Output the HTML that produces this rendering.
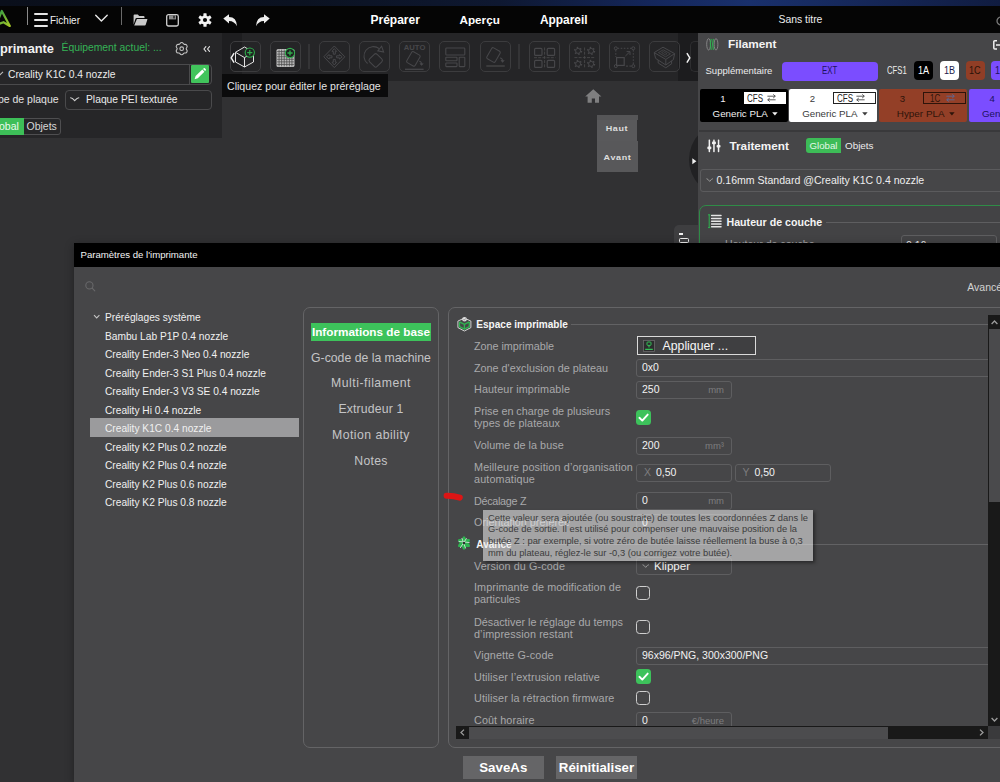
<!DOCTYPE html>
<html lang="fr">
<head>
<meta charset="utf-8">
<title>Creality Print</title>
<style>
*{box-sizing:border-box;margin:0;padding:0}
html,body{width:1000px;height:782px;overflow:hidden;background:#313133}
body{font-family:"Liberation Sans",sans-serif;color:#e6e6e6;-webkit-font-smoothing:antialiased}
#root{position:relative;width:1000px;height:782px;overflow:hidden;background:#313133}
.a{position:absolute}
.t{position:absolute;white-space:nowrap;line-height:16px;height:16px}
.b{font-weight:700}
svg{position:absolute;overflow:visible}
/* top */
#strip{left:0;top:0;width:1000px;height:6px;background:linear-gradient(90deg,#0a0f1b 0%,#0b1221 30%,#0e1831 50%,#14265a 65%,#19306c 75%,#142452 90%,#101c40 100%)}
#bar{left:0;top:5.7px;width:1000px;height:27.1px;background:#050505}
/* left panel */
#lp{left:0;top:33px;width:221.6px;height:105px;background:#262628}
.box{position:absolute;border:1px solid #515153;border-radius:4px}
/* toolbar */
#tb{left:222px;top:33px;width:477px;height:48px;background:#252527}
.tbtn{position:absolute;top:41px;width:31px;height:31px;border:1px solid #3c3c3e;border-radius:5px}
.tsep{position:absolute;top:44px;width:2px;height:25px;background:#343436}
/* right panel */
#rp{left:698.4px;top:33px;width:302px;height:210px;background:#464648}
.card{position:absolute;top:89px;height:33.2px;border-radius:2px}
.chip{position:absolute;top:61.3px;width:19.4px;height:19.2px;border-radius:4px;font-size:10.6px;line-height:19.4px;text-align:center}
/* dialog */
#dlg{left:74px;top:243px;width:926px;height:539px;background:#464648;box-shadow:0 2px 9px rgba(0,0,0,0.32)}
#dtitle{left:74px;top:243px;width:926px;height:24px;background:#000}
.tree{position:absolute;left:105px;font-size:10.2px;color:#f0f0f0;white-space:nowrap;line-height:16px;height:16px}
.tab{position:absolute;left:304px;width:134px;text-align:center;font-size:12.25px;color:#c4c4c6;white-space:nowrap;line-height:18px;height:18px}
.lbl{position:absolute;left:474px;margin-top:-0.6px;font-size:10.8px;color:#a9a9ab;white-space:nowrap;line-height:12px}
.inp{position:absolute;left:636px;height:18px;border:1px solid #5e5e60;border-radius:3px;font-size:10.5px;line-height:15.8px;color:#f2f2f2;padding-left:5px;white-space:nowrap}
.unit{position:absolute;right:7px;top:0;color:#7d7d7f;font-size:9.5px}
.cb{position:absolute;left:636px;width:15px;height:15px;border-radius:3.5px}
.cb.on{background:#3dc25b}
.cb.off{border:1.5px solid #cfcfcf;background:transparent;width:14px;height:14px}
.btn{position:absolute;top:756px;height:23.4px;background:#656567;color:#fff;font-weight:700;text-align:center;line-height:23px;white-space:nowrap}
</style>
</head>
<body>
<div id="root">

<!-- ===== desktop strip + title bar ===== -->
<div class="a" id="strip"></div>
<div class="a" id="bar"></div>
<!-- logo -->
<svg style="left:0;top:9px" width="12" height="20" viewBox="0 9 12 20">
  <defs><linearGradient id="lg" x1="0" y1="0" x2="1" y2="1"><stop offset="0" stop-color="#2f9a45"/><stop offset="1" stop-color="#a6c826"/></linearGradient></defs>
  <path d="M-3 22.5 L1.8 11 L9.8 26 L3.5 22.2 L-2 24.2" fill="none" stroke="url(#lg)" stroke-width="2.2" stroke-linejoin="round" stroke-linecap="round"/>
</svg>
<div class="a" style="left:27px;top:7px;width:1px;height:18px;background:#8a8a8a"></div>
<div class="a" style="left:34px;top:13px;width:13.5px;height:1.5px;background:#e6e6e6;border-radius:1px"></div>
<div class="a" style="left:34px;top:19px;width:13.5px;height:1.5px;background:#e6e6e6;border-radius:1px"></div>
<div class="a" style="left:34px;top:25px;width:13.5px;height:1.5px;background:#e6e6e6;border-radius:1px"></div>
<div class="t" style="left:50px;top:12.5px;font-size:10px;color:#f0f0f0">Fichier</div>
<svg style="left:95px;top:14px" width="13" height="9" viewBox="0 0 13 9"><path d="M0.7 1.2 L6.4 7 L12.2 1.2" fill="none" stroke="#e8e8e8" stroke-width="1.4" stroke-linecap="round" stroke-linejoin="round"/></svg>
<div class="a" style="left:120.5px;top:7px;width:1px;height:18px;background:#6a6a6a"></div>
<!-- folder -->
<svg style="left:133px;top:14px" width="15" height="12" viewBox="0 0 15 12"><path d="M0.6 1.4 Q0.6 0.5 1.5 0.5 L4.8 0.5 L6.2 2 L10.6 2 Q11.5 2 11.5 2.9 L11.5 4 L3.6 4 Q2.7 4 2.4 4.9 L0.6 10.4 Z" fill="#c9c9c9"/><path d="M3.9 4.9 L14 4.9 Q14.6 4.9 14.4 5.6 L12.7 10.8 Q12.5 11.5 11.8 11.5 L1.2 11.5 Z" fill="#c9c9c9"/></svg>
<!-- save -->
<svg style="left:166px;top:13.5px" width="13" height="13" viewBox="0 0 13 13"><rect x="0.7" y="0.7" width="11.6" height="11.3" rx="1.8" fill="none" stroke="#d0d0d0" stroke-width="1.3"/><rect x="3" y="1.2" width="7" height="4.2" fill="#8d8d8d"/><rect x="7.2" y="1.8" width="1.6" height="2.6" fill="#2a2a2a"/></svg>
<!-- gear -->
<svg style="left:198px;top:13px" width="14" height="14" viewBox="-7 -7 14 14"><g fill="#f4f4f4"><circle r="4.6"/><g id="gt"><rect x="-1.6" y="-6.8" width="3.2" height="3" rx="0.6"/></g><use href="#gt" transform="rotate(60)"/><use href="#gt" transform="rotate(120)"/><use href="#gt" transform="rotate(180)"/><use href="#gt" transform="rotate(240)"/><use href="#gt" transform="rotate(300)"/></g><circle r="2.1" fill="#050505"/></svg>
<!-- undo / redo -->
<svg style="left:223px;top:13.5px" width="15" height="13" viewBox="0 0 15 13"><path d="M0.3 4.6 L6 0.2 L6 2.9 Q13.6 2.9 14 12.2 Q11.6 7 6 6.9 L6 9.4 Z" fill="#eeeeee"/></svg>
<svg style="left:255px;top:13.5px" width="15" height="13" viewBox="0 0 15 13"><path d="M14.7 4.6 L9 0.2 L9 2.9 Q1.4 2.9 1 12.2 Q3.4 7 9 6.9 L9 9.4 Z" fill="#eeeeee"/></svg>
<div class="t b" style="left:370.5px;top:11.5px;font-size:12px;color:#fff">Préparer</div>
<div class="t b" style="left:459.5px;top:11.5px;font-size:11.7px;color:#fff">Aperçu</div>
<div class="t b" style="left:540px;top:11.5px;font-size:11.9px;color:#fff">Appareil</div>
<div class="t" style="left:778.5px;top:12px;font-size:10.4px;color:#ededed">Sans titre</div>
<svg style="left:996.3px;top:15.7px" width="8" height="10" viewBox="0 0 8 10"><circle cx="5" cy="5" r="4" fill="none" stroke="#7a7a7a" stroke-width="1.3"/></svg>

<!-- ===== viewport items ===== -->
<div class="a" id="tb"></div>
<div class="a" style="left:222px;top:33px;width:19.5px;height:48px;background:#1e1e20"></div>
<div class="a" style="left:678px;top:33px;width:21px;height:48px;background:#1c1c1e"></div>
<div class="tbtn" style="left:229.5px"></div>
<div class="tbtn" style="left:269.5px"></div>
<div class="tbtn" style="left:318.5px"></div>
<div class="tbtn" style="left:358.5px"></div>
<div class="tbtn" style="left:399px"></div>
<div class="tbtn" style="left:439px"></div>
<div class="tbtn" style="left:479.5px"></div>
<div class="tbtn" style="left:528.5px"></div>
<div class="tbtn" style="left:568.5px"></div>
<div class="tbtn" style="left:608.5px"></div>
<div class="tbtn" style="left:648.5px"></div>
<div class="tbtn" style="left:689.5px;width:12px;border-right:none;border-radius:5px 0 0 5px;border-color:#2e2e30"></div>
<div class="tsep" style="left:308px"></div><div class="tsep" style="left:518px"></div>
<svg style="left:229.5px;top:53px" width="5" height="10" viewBox="0 0 5 10"><path d="M3.8 0.6 L1.2 4.9 L3.8 9.2" fill="none" stroke="#f2f2f2" stroke-width="1.5" stroke-linejoin="round" stroke-linecap="round"/></svg>
<svg style="left:685.5px;top:53px" width="5" height="10" viewBox="0 0 5 10"><path d="M1.2 0.6 L3.8 4.9 L1.2 9.2" fill="none" stroke="#f2f2f2" stroke-width="1.5" stroke-linejoin="round" stroke-linecap="round"/></svg>
<svg style="left:229px;top:41px" width="32" height="31" viewBox="229 41 32 31">
<path d="M244.5 47 L253.5 52.3 L253.5 62 L244.5 67 L235.5 62 L235.5 52.3 Z M235.5 52.3 L244.5 57.6 L253.5 52.3 M244.5 57.6 L244.5 67" fill="none" stroke="#e4e4e4" stroke-width="1" stroke-linejoin="round"/>
<circle cx="249.8" cy="52.6" r="4.6" fill="#202022" stroke="#2fae4c" stroke-width="1.1"/><path d="M247.2 52.6 H252.4 M249.8 50 V55.2" stroke="#2fae4c" stroke-width="1.2"/></svg>
<svg style="left:269px;top:41px" width="32" height="31" viewBox="269 41 32 31"><rect x="276.5" y="49" width="18" height="18" rx="1.6" fill="#bdbdbd"/><path d="M279.07 49.6 V66.4" stroke="#4a4a4a" stroke-width="0.75"/><path d="M277.1 51.57 H293.9" stroke="#4a4a4a" stroke-width="0.75"/><path d="M281.64 49.6 V66.4" stroke="#4a4a4a" stroke-width="0.75"/><path d="M277.1 54.14 H293.9" stroke="#4a4a4a" stroke-width="0.75"/><path d="M284.21 49.6 V66.4" stroke="#4a4a4a" stroke-width="0.75"/><path d="M277.1 56.71 H293.9" stroke="#4a4a4a" stroke-width="0.75"/><path d="M286.79 49.6 V66.4" stroke="#4a4a4a" stroke-width="0.75"/><path d="M277.1 59.29 H293.9" stroke="#4a4a4a" stroke-width="0.75"/><path d="M289.36 49.6 V66.4" stroke="#4a4a4a" stroke-width="0.75"/><path d="M277.1 61.86 H293.9" stroke="#4a4a4a" stroke-width="0.75"/><path d="M291.93 49.6 V66.4" stroke="#4a4a4a" stroke-width="0.75"/><path d="M277.1 64.43 H293.9" stroke="#4a4a4a" stroke-width="0.75"/><circle cx="290" cy="53" r="4.6" fill="#202022" stroke="#2fae4c" stroke-width="1.1"/><path d="M287.4 53 H292.6 M290 50.4 V55.6" stroke="#2fae4c" stroke-width="1.4"/></svg>
<svg style="left:318px;top:41px" width="32" height="31" viewBox="318 41 32 31" fill="none" stroke="#47474a" stroke-width="1">
<path d="M334.3 46 L344.8 56.8 L334.3 67.6 L323.8 56.8 Z"/>
<path d="M334.3 48.6 L336.6 51.4 H335.3 V54.2 H333.3 V51.4 H332 Z M334.3 65 L336.6 62.2 H335.3 V59.4 H333.3 V62.2 H332 Z M326.4 56.8 L329.2 54.5 V55.8 H332 V57.8 H329.2 V59.1 Z M342.2 56.8 L339.4 54.5 V55.8 H336.6 V57.8 H339.4 V59.1 Z"/></svg>
<svg style="left:358px;top:41px" width="32" height="31" viewBox="358 41 32 31" fill="none" stroke="#47474a" stroke-width="1.05">
<path d="M367.6 63.5 A9.3 9.3 0 0 1 379.2 48.6"/><path d="M381.6 46.2 L383.6 52 L377.8 50.8 Z"/>
<rect x="370.4" y="55.1" width="10.6" height="10.6" rx="2" transform="rotate(45 375.7 60.4)"/></svg>
<svg style="left:399px;top:41px" width="32" height="31" viewBox="399 41 32 31" fill="none" stroke="#47474a" stroke-width="1.05">
<text x="414.6" y="50.2" font-family="Liberation Sans" font-weight="700" font-size="7.4" text-anchor="middle" fill="#47474a" stroke="none" textLength="21.5" lengthAdjust="spacingAndGlyphs">AUTO</text>
<rect x="408.6" y="52.6" width="9.6" height="12.6" rx="1.4" transform="rotate(30 413.4 58.9)"/>
<path d="M419.2 61.2 Q421.6 61.2 421.6 64.6 M420 63.3 L421.6 65 L423.2 63.3"/><path d="M405 69.3 H423.6" stroke-width="1.3"/></svg>
<svg style="left:439px;top:41px" width="32" height="31" viewBox="439 41 32 31" fill="none" stroke="#47474a" stroke-width="1.1">
<rect x="445.8" y="48" width="19" height="7" rx="0.8"/><rect x="445.8" y="57.2" width="11.2" height="3.6" rx="0.6"/><rect x="445.8" y="63" width="11.2" height="3.6" rx="0.6"/><rect x="459.2" y="57.2" width="5.6" height="9.4" rx="0.6"/></svg>
<svg style="left:479px;top:41px" width="32" height="31" viewBox="479 41 32 31" fill="none" stroke="#47474a" stroke-width="1.05">
<rect x="488.7" y="48.7" width="9.6" height="12.6" rx="1.4" transform="rotate(30 493.5 55)"/>
<path d="M500 58 Q502.6 58 502.6 61.4 M501 60.2 L502.6 61.9 L504.2 60.2"/><path d="M486.3 66 H504.8" stroke-width="1.3"/></svg>
<svg style="left:528px;top:41px" width="32" height="31" viewBox="528 41 32 31" fill="none" stroke="#47474a" stroke-width="1.15">
<rect x="534.6" y="48.4" width="7.4" height="7" rx="1"/><rect x="547.2" y="48.4" width="7.4" height="7" rx="1"/><rect x="534.6" y="60.4" width="7.4" height="7" rx="1"/><rect x="547.2" y="60.4" width="7.4" height="7" rx="1"/>
<path d="M544.6 47.5 V68 M534 57.7 H555.4" stroke-dasharray="3 1.2" stroke-width="0.9"/></svg>
<svg style="left:568px;top:41px" width="32" height="31" viewBox="568 41 32 31" fill="none" stroke="#47474a" stroke-width="1"><circle cx="578.1" cy="50.9" r="2.5"/><circle cx="578.1" cy="50.9" r="3.4" stroke-dasharray="1.5 2.06" stroke-width="1.4"/><circle cx="591.1" cy="50.9" r="2.5"/><circle cx="591.1" cy="50.9" r="3.4" stroke-dasharray="1.5 2.06" stroke-width="1.4"/><circle cx="578.1" cy="63.9" r="2.5"/><circle cx="578.1" cy="63.9" r="3.4" stroke-dasharray="1.5 2.06" stroke-width="1.4"/><circle cx="591.1" cy="63.9" r="2.5"/><circle cx="591.1" cy="63.9" r="3.4" stroke-dasharray="1.5 2.06" stroke-width="1.4"/><path d="M584.6 47.5 V68 M574.4 57.6 H595" stroke-dasharray="3 1.2" stroke-width="0.9"/></svg>
<svg style="left:608px;top:41px" width="32" height="31" viewBox="608 41 32 31" fill="none" stroke="#47474a" stroke-width="1">
<path d="M617.6 48.3 H631.6 M633.3 50 V64.4 M615.8 50 V57" stroke-dasharray="1.6 1.5"/><path d="M626 66.1 H631.6" stroke-dasharray="2 1.4"/>
<circle cx="615.8" cy="48.3" r="1.5"/><circle cx="633.3" cy="48.3" r="1.5"/><circle cx="615.8" cy="66.1" r="1.5"/><circle cx="633.3" cy="66.1" r="1.5"/>
<rect x="616.6" y="57.6" width="7.6" height="7.8" stroke-width="1.2"/><path d="M625.4 56 L629.8 51.8 M626.6 51.6 H630 V55"/></svg>
<svg style="left:648px;top:41px" width="32" height="31" viewBox="648 41 32 31" fill="none" stroke="#47474a" stroke-width="1" stroke-linejoin="round">
<path d="M654.2 52.6 L663 47.2 L674.6 53.6 L665.8 59.4 Z M654.2 52.6 L655.6 58.4 L665.8 65 L665.8 59.4 M674.6 53.6 L673.4 59.6 L665.8 65 M658.2 60 V63 L665.8 67.8 L671.6 63.8 V61"/>
<path d="M658.4 52.6 L663.2 49.8 L670.4 53.8 L665.6 56.8 Z" stroke-width="0.8"/><path d="M661.6 52.6 L663.4 51.6 L667 53.7 L665.3 54.8 Z" stroke-width="0.7"/></svg>
<div class="a" style="left:221px;top:74px;width:166.5px;height:23px;background:#0b0b0c"></div>
<div class="t" style="left:227px;top:78px;font-size:10.6px;color:#e4e4e4">Cliquez pour éditer le préréglage</div>
<svg style="left:585px;top:89px" width="17" height="14" viewBox="0 0 17 14"><path d="M8.3 0.2 L16.4 7.6 H14 V13.8 H10 V9.6 H6.8 V13.8 H2.6 V7.6 H0.2 Z" fill="#7f7f80"/></svg>
<div class="a" style="left:597px;top:115px;width:40.5px;height:5px;background:#555557"></div>
<div class="a" style="left:597px;top:120px;width:40px;height:21px;background:#59595b"></div>
<div class="a" style="left:597px;top:141px;width:41px;height:31px;background:#58585a"></div>
<div class="t b" style="left:597px;top:121px;width:40px;text-align:center;font-size:7.4px;color:#dedede;letter-spacing:0.5px;transform:scaleX(1.22)">Haut</div>
<div class="t b" style="left:597px;top:149.5px;width:41px;text-align:center;font-size:7.4px;color:#dedede;letter-spacing:0.5px;transform:scaleX(1.22)">Avant</div>
<div class="a" style="left:689.3px;top:122px;width:75px;height:75px;border-radius:38px;background:#212123"></div>
<svg style="left:691.5px;top:157.5px" width="5" height="7" viewBox="0 0 5 7"><path d="M0.3 0.3 L4.4 3.3 L0.3 6.3 Z" fill="#f0f0f0"/></svg>
<div class="a" style="left:674px;top:224.5px;width:24.5px;height:19px;background:#3e3e40;border-radius:5px 0 0 0"></div>
<div class="a" style="left:679px;top:233px;width:4px;height:1.6px;background:#eee"></div>
<div class="a" style="left:678.5px;top:238px;width:10px;height:5px;border:1.2px solid #eee;border-radius:1.5px"></div>
<div class="a" id="lp"></div>
<div class="t b" style="left:-15px;top:41px;font-size:12.8px;color:#f2f2f2">Imprimante</div>
<div class="t" style="left:61.5px;top:40px;font-size:10.35px;color:#35b356">Équipement actuel: ...</div>
<svg style="left:175.3px;top:41.7px" width="13.4" height="13.4" viewBox="-7 -7 14 14"><path d="M0 -6.4 C1.6 -6.4 1.9 -4.6 2.6 -4.5 C3.5 -4.3 4.7 -5.4 5.55 -3.2 C6.4 -1.6 4.7 -0.9 4.7 0 C4.7 0.9 6.4 1.6 5.55 3.2 C4.7 5.4 3.5 4.3 2.6 4.5 C1.9 4.6 1.6 6.4 0 6.4 C-1.6 6.4 -1.9 4.6 -2.6 4.5 C-3.5 4.3 -4.7 5.4 -5.55 3.2 C-6.4 1.6 -4.7 0.9 -4.7 0 C-4.7 -0.9 -6.4 -1.6 -5.55 -3.2 C-4.7 -5.4 -3.5 -4.3 -2.6 -4.5 C-1.9 -4.6 -1.6 -6.4 0 -6.4 Z" fill="none" stroke="#c4c4c4" stroke-width="1.15"/><circle r="1.9" fill="none" stroke="#c4c4c4" stroke-width="1.15"/></svg>
<svg style="left:203px;top:46.4px" width="8" height="6" viewBox="0 0 8 6"><path d="M2.9 0.7 L0.9 3 L2.9 5.3 M6.5 0.7 L4.5 3 L6.5 5.3" fill="none" stroke="#e6e6e6" stroke-width="1.1" stroke-linecap="round" stroke-linejoin="round"/></svg>
<div class="box" style="left:-6px;top:63.5px;width:218px;height:21px;border-color:#4a4a4c"></div>
<div class="a" style="left:188.5px;top:64.5px;width:1px;height:19px;background:#4a4a4c"></div>
<svg style="left:-1px;top:71px" width="6" height="5" viewBox="0 0 6 5"><path d="M-2 0.8 L1 3.8 L4 0.8" fill="none" stroke="#bbb" stroke-width="1.1"/></svg>
<div class="t" style="left:8px;top:66.9px;font-size:10.3px;color:#ececec">Creality K1C 0.4 nozzle</div>
<div class="a" style="left:190.5px;top:65px;width:18px;height:18px;background:#41c45c;border-radius:1px"></div>
<svg style="left:190.5px;top:65px" width="18" height="18" viewBox="0 0 18 18"><path d="M3.6 14.3 L4.6 10.9 L11.3 4.6 L13.4 6.8 L6.8 13.2 Z" fill="#fff"/><path d="M12 3.9 L12.8 3.2 Q13.4 2.8 13.9 3.3 L14.8 4.2 Q15.2 4.8 14.8 5.3 L14.1 6.1 Z" fill="#fff"/></svg>
<div class="t" style="left:-13.2px;top:91px;font-size:10.5px;color:#e2e2e2">Type de plaque</div>
<div class="box" style="left:65px;top:89.5px;width:147px;height:20.5px;border-color:#4a4a4c"></div>
<svg style="left:70px;top:97px" width="10" height="5" viewBox="0 0 10 5"><path d="M0.6 0.8 Q2.2 0.8 4.7 3.6 Q7.2 0.8 8.8 0.8" fill="none" stroke="#d0d0d0" stroke-width="1.1" stroke-linecap="round"/></svg>
<div class="t" style="left:86px;top:92px;font-size:10.3px;color:#ececec">Plaque PEI texturée</div>
<div class="box" style="left:-14px;top:118px;width:75px;height:16.5px;border-color:#4e4e50;border-radius:3px"></div>
<div class="a" style="left:-14px;top:118px;width:37.5px;height:16.5px;background:#3dbf58;border-radius:3px 0 0 3px"></div>
<div class="t" style="left:-11.5px;top:118px;font-size:10.5px;color:#eafbee">Global</div>
<div class="t" style="left:26.5px;top:118px;font-size:10.5px;color:#d8d8d8">Objets</div>
<div class="a" id="rp"></div>
<svg style="left:706px;top:38px" width="13" height="13" viewBox="0 0 13 13" fill="none"><ellipse cx="2.6" cy="6.3" rx="1.9" ry="5.7" stroke="#8a8a8a" stroke-width="0.9"/><ellipse cx="10" cy="6.3" rx="1.9" ry="5.7" stroke="#8a8a8a" stroke-width="0.9"/><path d="M5.2 0.8 Q3.4 6.3 5.2 11.8 M7.4 0.8 Q5.6 6.3 7.4 11.8" stroke="#2fb350" stroke-width="1.1"/></svg>
<div class="t b" style="left:728px;top:36px;font-size:11.8px;color:#f4f4f4">Filament</div>
<svg style="left:993px;top:40px" width="8" height="10" viewBox="0 0 8 10" fill="none" stroke="#f0f0f0" stroke-width="1.5"><path d="M4 0.8 H1.8 Q0.8 0.8 0.8 1.8 V8 Q0.8 9 1.8 9 H4 M3 4.9 H8"/></svg>
<div class="t" style="left:705.5px;top:63px;font-size:9.55px;color:#ececec">Supplémentaire</div>
<div class="a" style="left:781.5px;top:61.5px;width:96.5px;height:19px;background:#7b4dff;border-radius:4px"></div>
<div class="t" style="left:822px;top:63px;font-size:10px;color:#1d1160;transform:scaleX(0.78);transform-origin:0 50%;">EXT</div>
<div class="t" style="left:887px;top:63px;font-size:10px;color:#ececec;transform:scaleX(0.77);transform-origin:0 50%;">CFS1</div>
<div class="chip" style="left:914px;background:#000;color:#fff"><span style="display:inline-block;transform:scaleX(0.86)">1A</span></div>
<div class="chip" style="left:939.5px;background:#fff;color:#1b1b4a"><span style="display:inline-block;transform:scaleX(0.86)">1B</span></div>
<div class="chip" style="left:965.5px;background:#913e26;color:#2a1309"><span style="display:inline-block;transform:scaleX(0.86)">1C</span></div>
<div class="chip" style="left:991.3px;background:#7b4dff;color:#1d1160"><span style="display:inline-block;transform:scaleX(0.86)">1D</span></div>
<div class="card" style="left:699.8px;width:88px;background:#000"></div>
<div class="t" style="left:717.8px;top:91.2px;width:10px;text-align:center;font-size:9.6px;color:#f2f2f2">1</div>
<div class="a" style="left:743.5999999999999px;top:92px;width:42.6px;height:12px;background:#fff;"></div>
<div class="t" style="left:747.3px;top:90.8px;font-size:10px;color:#222;transform:scaleX(0.8);transform-origin:0 50%;">CFS</div>
<svg style="left:766.8px;top:94px" width="9" height="8" viewBox="0 0 9 8"><path d="M0.4 2.2 H8.2 M6.2 0.4 L8.3 2.2 L6.2 4 M8.6 5.8 H0.8 M2.8 4 L0.7 5.8 L2.8 7.6" fill="none" stroke="#4a4a4a" stroke-width="0.9"/></svg>
<div class="t" style="left:712.5999999999999px;top:106px;font-size:9.75px;color:#f2f2f2">Generic PLA</div>
<svg style="left:772.1999999999999px;top:112.4px" width="6" height="4" viewBox="0 0 6 4"><path d="M0.2 0.3 H5.6 L2.9 3.4 Z" fill="#f2f2f2"/></svg>
<div class="card" style="left:789.4px;width:88px;background:#fff"></div>
<div class="t" style="left:807.4px;top:91.2px;width:10px;text-align:center;font-size:9.6px;color:#3a3a3a">2</div>
<div class="a" style="left:833.1999999999999px;top:92px;width:42.6px;height:12px;background:#fff;border:1px solid #222;"></div>
<div class="t" style="left:836.9px;top:90.8px;font-size:10px;color:#222;transform:scaleX(0.8);transform-origin:0 50%;">CFS</div>
<svg style="left:856.4px;top:94px" width="9" height="8" viewBox="0 0 9 8"><path d="M0.4 2.2 H8.2 M6.2 0.4 L8.3 2.2 L6.2 4 M8.6 5.8 H0.8 M2.8 4 L0.7 5.8 L2.8 7.6" fill="none" stroke="#4a4a4a" stroke-width="0.9"/></svg>
<div class="t" style="left:802.1999999999999px;top:106px;font-size:9.75px;color:#3a3a3a">Generic PLA</div>
<svg style="left:861.8px;top:112.4px" width="6" height="4" viewBox="0 0 6 4"><path d="M0.2 0.3 H5.6 L2.9 3.4 Z" fill="#3a3a3a"/></svg>
<div class="card" style="left:879.4px;width:88px;background:#933f27"></div>
<div class="t" style="left:897.4px;top:91.2px;width:10px;text-align:center;font-size:9.6px;color:#2d140a">3</div>
<div class="a" style="left:923.1999999999999px;top:92px;width:42.6px;height:12px;background:transparent;border:1px solid #2d140a;"></div>
<div class="t" style="left:929.5px;top:90.8px;font-size:10px;color:#2d140a;transform:scaleX(0.8);transform-origin:0 50%;">1C</div>
<svg style="left:946.4px;top:94px" width="9" height="8" viewBox="0 0 9 8"><path d="M0.4 2.2 H8.2 M6.2 0.4 L8.3 2.2 L6.2 4 M8.6 5.8 H0.8 M2.8 4 L0.7 5.8 L2.8 7.6" fill="none" stroke="#5a6a9a" stroke-width="0.9"/></svg>
<div class="t" style="left:896.8px;top:106px;font-size:9.9px;color:#2d140a">Hyper PLA</div>
<svg style="left:949.1999999999999px;top:112.4px" width="6" height="4" viewBox="0 0 6 4"><path d="M0.2 0.3 H5.6 L2.9 3.4 Z" fill="#2d140a"/></svg>
<div class="card" style="left:969.2px;width:88px;background:#7b4dff"></div>
<div class="t" style="left:987.2px;top:91.2px;width:10px;text-align:center;font-size:9.6px;color:#1d1160">4</div>
<div class="a" style="left:1013.0px;top:92px;width:42.6px;height:12px;background:transparent;border:1px solid #1d1160;"></div>
<div class="t" style="left:1019.3px;top:90.8px;font-size:10px;color:#1d1160;transform:scaleX(0.8);transform-origin:0 50%;">1D</div>
<svg style="left:1036.2px;top:94px" width="9" height="8" viewBox="0 0 9 8"><path d="M0.4 2.2 H8.2 M6.2 0.4 L8.3 2.2 L6.2 4 M8.6 5.8 H0.8 M2.8 4 L0.7 5.8 L2.8 7.6" fill="none" stroke="#4a4a4a" stroke-width="0.9"/></svg>
<div class="t" style="left:982.0px;top:106px;font-size:9.75px;color:#1d1160">Generic PLA</div>
<svg style="left:1041.6000000000001px;top:112.4px" width="6" height="4" viewBox="0 0 6 4"><path d="M0.2 0.3 H5.6 L2.9 3.4 Z" fill="#1d1160"/></svg>
<div class="a" style="left:699px;top:129.5px;width:301px;height:2px;background:#39393b"></div>
<svg style="left:707px;top:139px" width="14" height="14" viewBox="0 0 14 14" fill="#f2f2f2"><rect x="1.6" y="0.4" width="1.5" height="12.8" rx="0.6"/><rect x="6.2" y="0.4" width="1.5" height="12.8" rx="0.6"/><rect x="10.8" y="0.4" width="1.5" height="12.8" rx="0.6"/><rect x="0.4" y="7.6" width="3.9" height="2.6" rx="0.8"/><rect x="5" y="2.6" width="3.9" height="2.6" rx="0.8"/><rect x="9.6" y="6" width="3.9" height="2.6" rx="0.8"/></svg>
<div class="t b" style="left:729.5px;top:137.5px;font-size:11.75px;color:#f4f4f4">Traitement</div>
<div class="a" style="left:805.5px;top:137.5px;width:35.6px;height:15.5px;background:#3dbc57;border-radius:3px 0 0 3px"></div>
<div class="t" style="left:809.5px;top:137.5px;font-size:9.7px;color:#e4f8e8">Global</div>
<div class="t" style="left:845px;top:137.5px;font-size:9.9px;color:#ececec">Objets</div>
<div class="box" style="left:699.5px;top:168.5px;width:320px;height:23.5px;border-color:#5b5b5d;border-radius:3px"></div>
<svg style="left:705.5px;top:178px" width="8" height="5" viewBox="0 0 8 5"><path d="M0.5 0.7 Q1.8 0.7 3.7 3.4 Q5.6 0.7 6.9 0.7" fill="none" stroke="#9a9a9a" stroke-width="1"/></svg>
<div class="t" style="left:716.5px;top:172px;font-size:10.55px;color:#eeeeee">0.16mm Standard @Creality K1C 0.4 nozzle</div>
<div class="box" style="left:698.6px;top:204.8px;width:320px;height:60px;border-color:#2f8c47;border-radius:7px;background:#434345"></div>
<svg style="left:707px;top:214px" width="15" height="15" viewBox="0 0 15 15" fill="none"><path d="M1 0.8 H3.4 M2.2 0.8 V13.6 M1 13.6 H3.4" stroke="#2fb350" stroke-width="1"/><path d="M4.6 1.6 H14 M4.6 4.4 H14 M4.6 7.2 H14 M4.6 10 H14 M4.6 12.8 H14" stroke="#e6e6e6" stroke-width="1.5" stroke-linecap="round"/></svg>
<div class="t b" style="left:726.5px;top:213.5px;font-size:10.65px;color:#f4f4f4">Hauteur de couche</div>
<div class="a" style="left:826px;top:221.5px;width:180px;height:1px;background:#5e5e60"></div>
<div class="t" style="left:725px;top:235.5px;font-size:10.6px;color:#a8a8aa">Hauteur de couche</div>
<div class="box" style="left:901px;top:235px;width:96px;height:20px;border-color:#5e5e60;border-radius:3px"></div>
<div class="t" style="left:906px;top:236.5px;font-size:10.5px;color:#eeeeee">0.16</div>

<!-- ===== dialog ===== -->
<div class="a" id="dlg"></div>
<div class="a" id="dtitle"></div>
<div class="t" style="left:80.5px;top:247px;font-size:9.6px;color:#f4f4f4">Paramètres de l'imprimante</div>
<svg style="left:85px;top:281px" width="11" height="11" viewBox="0 0 11 11" fill="none" stroke="#68686a" stroke-width="1.1"><circle cx="4.4" cy="4.4" r="3.6"/><path d="M7.2 7.2 L9.8 9.8" stroke-linecap="round"/></svg>
<div class="t" style="left:967.3px;top:278.5px;font-size:10.5px;color:#d2d2d2">Avancé</div>
<svg style="left:92.5px;top:313.5px" width="8" height="6" viewBox="0 0 8 6"><path d="M1 1.2 L3.7 4 L6.4 1.2" fill="none" stroke="#c4c4c4" stroke-width="1.1"/></svg>
<div class="a" style="left:90px;top:418px;width:209px;height:18.5px;background:#9b9b9d"></div>
<div class="tree" style="top:310px">Préréglages système</div>
<div class="tree" style="top:329px">Bambu Lab P1P 0.4 nozzle</div>
<div class="tree" style="top:347px">Creality Ender-3 Neo 0.4 nozzle</div>
<div class="tree" style="top:366px">Creality Ender-3 S1 Plus 0.4 nozzle</div>
<div class="tree" style="top:384px">Creality Ender-3 V3 SE 0.4 nozzle</div>
<div class="tree" style="top:403px">Creality Hi 0.4 nozzle</div>
<div class="tree" style="top:421px">Creality K1C 0.4 nozzle</div>
<div class="tree" style="top:440px">Creality K2 Plus 0.2 nozzle</div>
<div class="tree" style="top:458px">Creality K2 Plus 0.4 nozzle</div>
<div class="tree" style="top:477px">Creality K2 Plus 0.6 nozzle</div>
<div class="tree" style="top:495px">Creality K2 Plus 0.8 nozzle</div>
<div class="box" style="left:303px;top:307px;width:136px;height:440.5px;border-color:#646466;border-radius:7px"></div>
<div class="a" style="left:311px;top:323px;width:120.2px;height:18px;background:#3dc25b"></div>
<div class="tab b" style="top:323.0px;color:#fff;font-size:11.75px">Informations de base</div>
<div class="tab" style="top:348.7px">G-code de la machine</div>
<div class="tab" style="top:374.4px;letter-spacing:0.5px">Multi-filament</div>
<div class="tab" style="top:400.2px;letter-spacing:0.17px">Extrudeur 1</div>
<div class="tab" style="top:425.9px;letter-spacing:0.45px">Motion ability</div>
<div class="tab" style="top:451.6px;letter-spacing:0.28px">Notes</div>
<div class="box" style="left:448px;top:307px;width:570px;height:440.5px;border-color:#646466;border-radius:7px"></div>
<svg style="left:457px;top:316px" width="15" height="16" viewBox="457 316 15 16" fill="none"><path d="M464.4 318 L470.9 321.1 V327.6 L464.4 331 L457.9 327.6 V321.1 Z" stroke="#d2d2d2" stroke-width="1" stroke-linejoin="round"/><path d="M459.5 321.9 V326.7 L464.4 329.2 L469.3 326.7 V321.9 M459.5 321.9 L464.4 324.3 L469.3 321.9 M464.4 324.3 V329.2" stroke="#2fb350" stroke-width="1.3" stroke-linejoin="round"/><circle cx="464.5" cy="319.3" r="2.3" fill="#dedede"/><path d="M463.5 319.4 L464.3 320.2 L465.6 318.5" stroke="#555" stroke-width="0.6"/></svg>
<div class="t b" style="left:476.3px;top:316.5px;font-size:10.05px;color:#f6f6f6">Espace imprimable</div>
<div class="a" style="left:571px;top:324px;width:417px;height:1px;background:#626264"></div>
<div class="lbl" style="top:340.3px"><span style="letter-spacing:-0.028px">Zone imprimable</span></div>
<div class="a" style="left:636.5px;top:336.3px;width:119.6px;height:18.8px;border:1.3px solid #dadada;background:#3f3f41"></div>
<svg style="left:643px;top:340px" width="12" height="12" viewBox="0 0 12 12" fill="none"><rect x="0.5" y="0.5" width="11" height="11" fill="#2c2c2e" stroke="#6a6a6c" stroke-width="0.8"/><rect x="4" y="2" width="4" height="3.4" rx="0.8" stroke="#35c257" stroke-width="1"/><path d="M6 5.4 V7.4 M2.2 9.4 H9.8" stroke="#35c257" stroke-width="1.1"/></svg>
<div class="t" style="left:662.5px;top:338px;font-size:12.3px;color:#f6f6f6">Appliquer ...</div>
<div class="lbl" style="top:362.9px">Zone d'exclusion de plateau</div>
<div class="inp" style="left:636px;top:359px;width:370px;">0x0</div>
<div class="lbl" style="top:383.6px"><span style="letter-spacing:0.099px">Hauteur imprimable</span></div>
<div class="inp" style="left:636px;top:380.7px;width:96px;">250<span class="unit">mm</span></div>
<div class="lbl" style="top:405.8px"><span style="letter-spacing:-0.030px">Prise en charge de plusieurs</span><br><span style="letter-spacing:0.080px">types de plateaux</span></div>
<div class="cb on" style="top:410px"></div>
<svg style="left:636px;top:410px" width="15" height="15" viewBox="0 0 15 15"><path d="M3.4 7.8 L6.3 10.6 L11.7 4.6" fill="none" stroke="#fff" stroke-width="1.9" stroke-linecap="round" stroke-linejoin="round"/></svg>
<div class="lbl" style="top:439.9px"><span style="letter-spacing:0.053px">Volume de la buse</span></div>
<div class="inp" style="left:636px;top:436.5px;width:96px;">200<span class="unit">mm³</span></div>
<div class="lbl" style="top:461.2px"><span style="letter-spacing:0.144px">Meilleure position d’organisation</span><br><span style="letter-spacing:0.142px">automatique</span></div>
<div class="inp" style="left:636px;top:463.5px;width:96px;"><span style="color:#7d7d7f;margin-left:2px;margin-right:5px">X</span>0,50</div>
<div class="inp" style="left:734.5px;top:463.5px;width:96px;"><span style="color:#7d7d7f;margin-left:2px;margin-right:5px">Y</span>0,50</div>
<div class="lbl" style="top:495.5px"><span style="letter-spacing:-0.300px">Décalage Z</span></div>
<div class="inp" style="left:636px;top:491.5px;width:96px;">0<span class="unit">mm</span></div>
<div class="lbl" style="top:516.6px">Orientation préférée</div>
<div class="inp" style="left:636px;top:513.5px;width:96px;">0</div>
<svg style="left:443px;top:491px" width="21" height="12" viewBox="443 491 21 12"><path d="M446.6 495.7 Q453 495.5 459.8 497.7" fill="none" stroke="#dc1515" stroke-width="6" stroke-linecap="round"/></svg>
<svg style="left:457px;top:536.4px" width="14" height="14" viewBox="-7 -7 14 14"><g fill="#2fb350"><ellipse rx="6.8" ry="2.5" transform="rotate(30)"/><ellipse rx="6.8" ry="2.5" transform="rotate(90)"/><ellipse rx="6.8" ry="2.5" transform="rotate(150)"/></g><g stroke="#e8e8e8" stroke-width="0.8" fill="none"><path d="M-5.4 -1.6 L5.6 -0.4 M-2.2 -5 L1.6 5.4 M2.6 -4.8 L-3.8 5"/></g><circle r="1.2" fill="#2a2a2a"/></svg>
<div class="t b" style="left:476.3px;top:536.6px;font-size:10.05px;color:#f6f6f6">Avancé</div>
<div class="a" style="left:516px;top:544px;width:472px;height:1px;background:#626264"></div>
<div class="lbl" style="top:560.9px"><span style="letter-spacing:0.092px">Version du G-code</span></div>
<div class="inp" style="left:636px;top:556.5px;width:96px;"><span style="font-size:11.6px;margin-left:12px">Klipper</span></div>
<svg style="left:642px;top:563.5px" width="8" height="5" viewBox="0 0 8 5"><path d="M0.5 0.7 Q1.8 0.7 3.7 3.4 Q5.6 0.7 6.9 0.7" fill="none" stroke="#9a9a9a" stroke-width="1"/></svg>
<div class="lbl" style="top:582.0px"><span style="letter-spacing:0.081px">Imprimante de modification de</span><br>particules</div>
<div class="cb off" style="top:586.4px"></div>
<div class="lbl" style="top:616.3px">Désactiver le réglage du temps<br><span style="letter-spacing:0.119px">d’impression restant</span></div>
<div class="cb off" style="top:619.8px"></div>
<div class="lbl" style="top:649.6px"><span style="letter-spacing:0.127px">Vignette G-code</span></div>
<div class="inp" style="left:636px;top:646.5px;width:370px;">96x96/PNG, 300x300/PNG</div>
<div class="lbl" style="top:671.2px"><span style="letter-spacing:0.124px">Utiliser l’extrusion relative</span></div>
<div class="cb on" style="top:669.3px"></div>
<svg style="left:636px;top:669.3px" width="15" height="15" viewBox="0 0 15 15"><path d="M3.4 7.8 L6.3 10.6 L11.7 4.6" fill="none" stroke="#fff" stroke-width="1.9" stroke-linecap="round" stroke-linejoin="round"/></svg>
<div class="lbl" style="top:692.8px"><span style="letter-spacing:0.119px">Utiliser la rétraction firmware</span></div>
<div class="cb off" style="top:691.3px"></div>
<div class="lbl" style="top:714.3px"><span style="letter-spacing:0.090px">Coût horaire</span></div>
<div class="inp" style="left:636px;top:711.5px;width:96px;">0<span class="unit">€/heure</span></div>
<div class="a" style="left:482.5px;top:510px;width:330.5px;height:50.5px;background:#eeeeee;opacity:0.56;box-shadow:2px 2px 3px rgba(0,0,0,0.7)"></div>
<div class="a" style="left:488px;top:512.5px;font-size:9.35px;line-height:11.9px;color:#141414;opacity:0.74;white-space:nowrap">Cette valeur sera ajoutée (ou soustraite) de toutes les coordonnées Z dans le<br>G-code de sortie. Il est utilisé pour compenser une mauvaise position de la<br>butée Z : par exemple, si votre zéro de butée laisse réellement la buse à 0,3<br>mm du plateau, réglez-le sur -0,3 (ou corrigez votre butée).</div>
<div class="a" style="left:456px;top:726px;width:532px;height:13px;background:#191919"></div>
<div class="a" style="left:469px;top:727px;width:418.6px;height:12px;background:#4c4c4e"></div>
<svg style="left:460px;top:729px" width="5" height="7" viewBox="0 0 5 7"><path d="M4 0.6 L1 3.5 L4 6.4" fill="none" stroke="#9c9c9c" stroke-width="1.3"/></svg>
<svg style="left:979px;top:729px" width="5" height="7" viewBox="0 0 5 7"><path d="M1 0.6 L4 3.5 L1 6.4" fill="none" stroke="#9c9c9c" stroke-width="1.3"/></svg>
<div class="a" style="left:988px;top:315px;width:12px;height:411px;background:#191919"></div>
<div class="a" style="left:989px;top:328.8px;width:12px;height:173.7px;background:#4a4a4c"></div>
<svg style="left:990.5px;top:319.5px" width="7" height="5" viewBox="0 0 7 5"><path d="M0.6 4 L3.5 1 L6.4 4" fill="none" stroke="#9c9c9c" stroke-width="1.3"/></svg>
<svg style="left:990.5px;top:716.5px" width="7" height="5" viewBox="0 0 7 5"><path d="M0.6 1 L3.5 4 L6.4 1" fill="none" stroke="#9c9c9c" stroke-width="1.3"/></svg>
<div class="a" style="left:988px;top:726px;width:12px;height:13px;background:#3a3a3c"></div>
<div class="btn" style="left:463px;width:80.5px;font-size:13.3px">SaveAs</div>
<div class="btn" style="left:556px;width:81px;font-size:13.3px">Réinitialiser</div>

</div>
</body>
</html>
